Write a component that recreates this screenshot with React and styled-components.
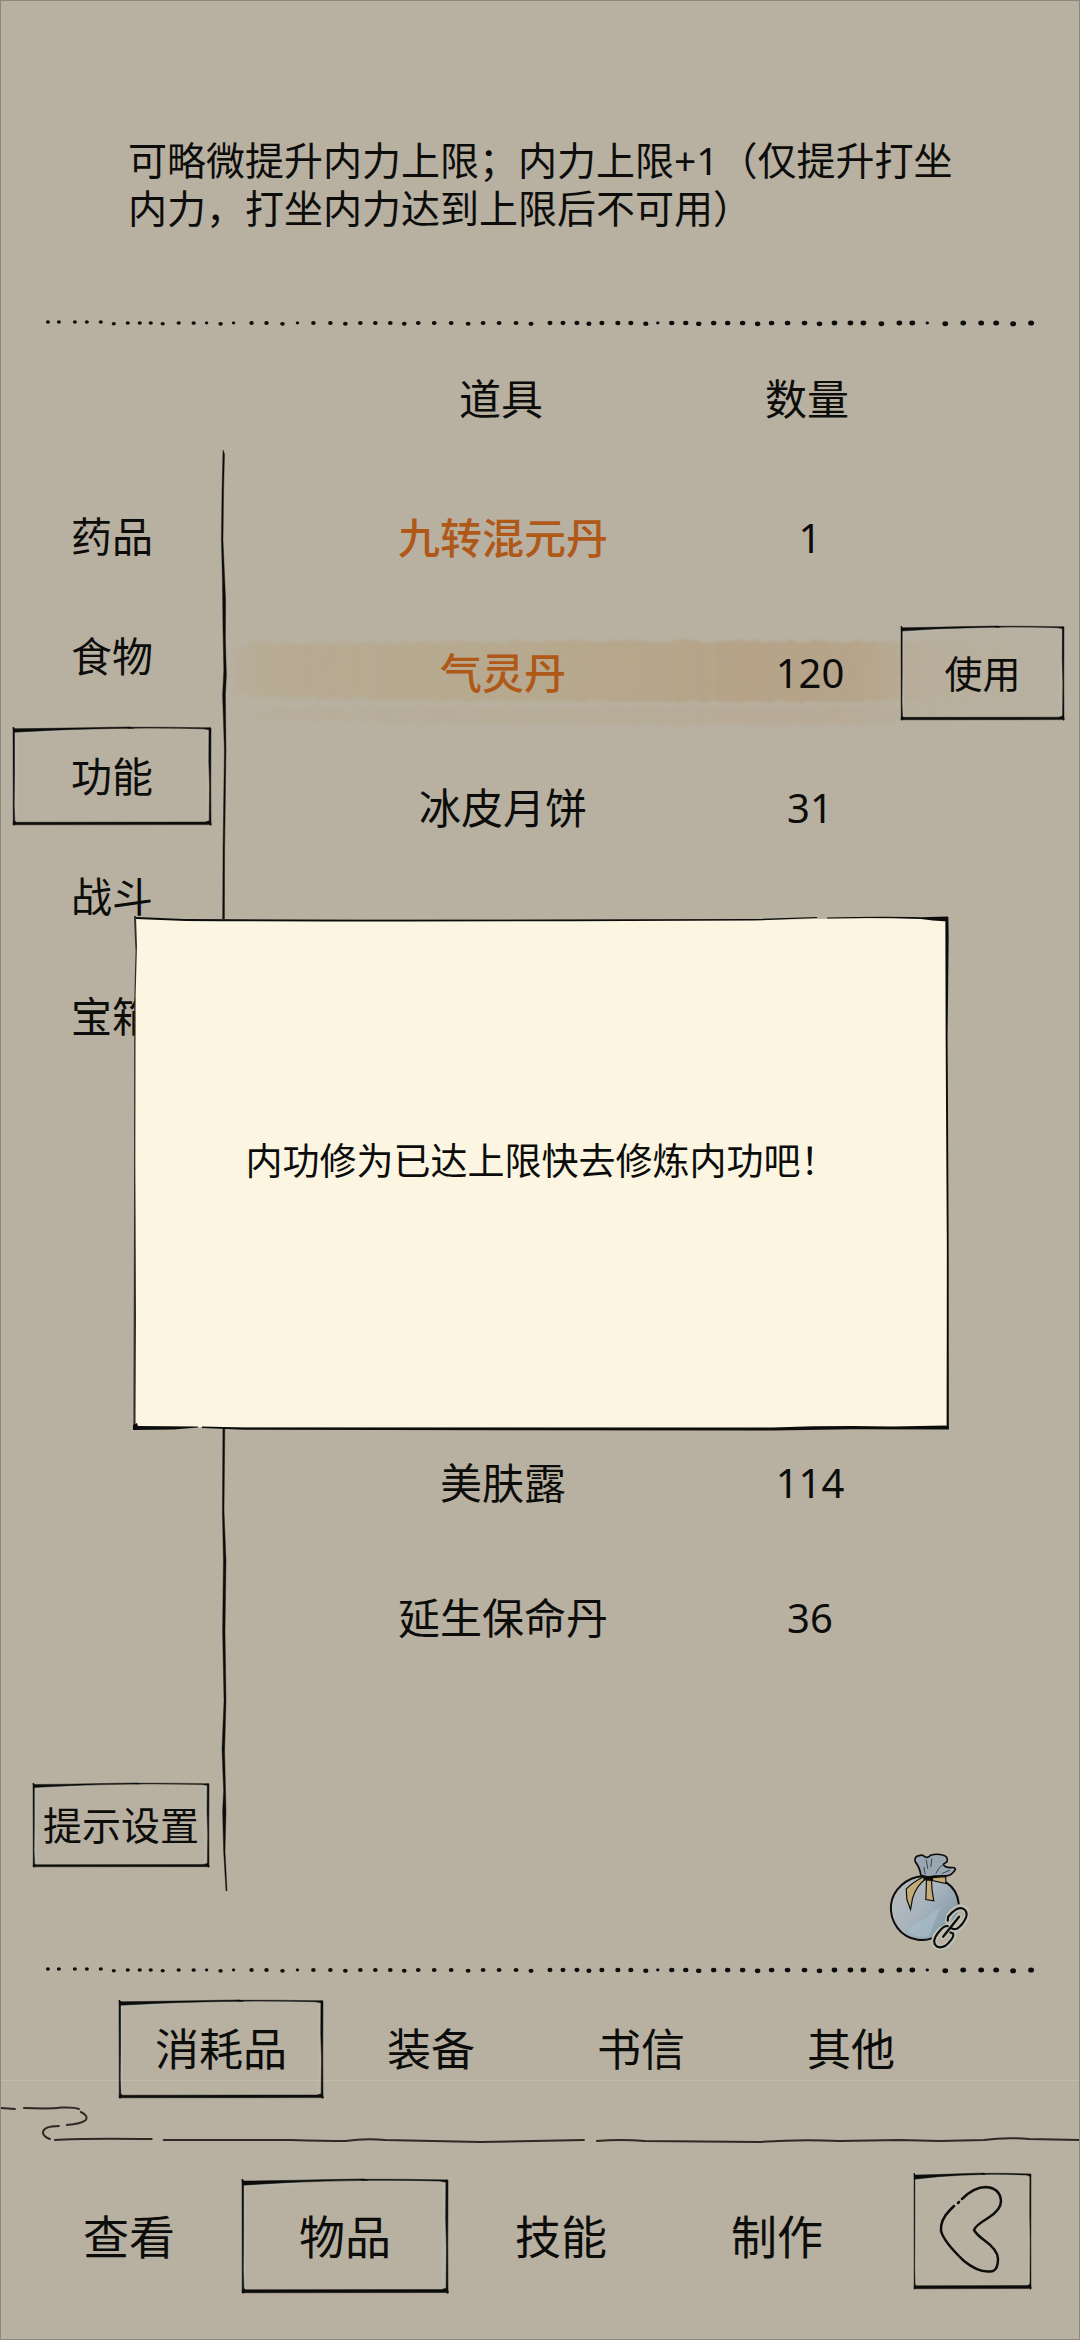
import React from 'react'
import styled, { createGlobalStyle, css } from 'styled-components'

const ink = '#0c0d0b'
const paper = '#b8b0a1'
const edge = '#8b887c'

const GlobalStyle = createGlobalStyle`
    * {
        box-sizing: border-box;
    }

    body {
        margin: 0;
        background: ${paper};
        color: ${ink};
        font-family: 'Noto Sans', 'Noto Sans CJK SC', sans-serif;
    }

    button {
        font-family: inherit;
        color: inherit;
        background: none;
        border: 0;
        padding: 0;
        cursor: pointer;
    }
`

const Screen = styled.div`
    position: relative;
    display: flex;
    flex-direction: column;
    min-height: 100vh;
    border: 1px solid ${edge};
`

const Description = styled.p`
    margin: 0;
    padding: 135px 100px 84px 127px;
    font-size: 39px;
    line-height: 48px;
`

const DotSvg = styled.svg`
    display: block;
    flex: none;
    width: 100%;
    height: 12px;
`

const Body = styled.main`
    flex: 1;
    display: flex;
`

const Sidebar = styled.nav`
    flex: none;
    display: flex;
    flex-direction: column;
    gap: 22px;
    width: 214px;
    padding: 159px 4px 96px 12px;
`

const inkButton = css`
    position: relative;
    display: flex;
    align-items: center;
    justify-content: center;
    line-height: 60px;
    white-space: nowrap;
`

const Category = styled.button`
    ${inkButton}
    width: 198px;
    height: 98px;
    font-size: 41px;
`

const SettingsButton = styled.button`
    ${inkButton}
    align-self: flex-end;
    width: 176px;
    height: 84px;
    margin: auto 2px 0 0;
    font-size: 39px;
`

const Rule = styled.svg`
    flex: none;
    width: 16px;
    margin: 122px 0 72px;
`

const Content = styled.section`
    flex: 1;
    display: flex;
    flex-direction: column;
    justify-content: space-between;
    align-items: flex-end;
`

const Table = styled.table`
    width: 100%;
    table-layout: fixed;
    border-collapse: collapse;
    font-size: 42px;
    line-height: 60px;
    text-align: center;
`

const HeadCell = styled.th`
    height: 142px;
    padding: 0;
    font-weight: 400;
    width: ${props => props.$width || 'auto'};
    padding-left: ${props => props.$indent || '0'};
`

const Row = styled.tr`
    position: relative;
    height: 135px;
`

const NameCell = styled.td`
    padding: 0 0 0 62px;
    font-weight: ${props => props.$rare ? 500 : 400};
    color: ${props => props.$rare ? '#b05818' : 'inherit'};
`

const CountCell = styled.td`
    padding: 0 0 0 6px;
    font-size: 40px;
`

const ActionCell = styled.td`
    padding: 0;
`

const Label = styled.span`
    position: relative;
`

const BrushSvg = styled.svg`
    position: absolute;
    left: 0;
    top: 32px;
    width: 100%;
    height: 96px;
`

const UseButton = styled.button`
    ${inkButton}
    width: 163px;
    height: 94px;
    font-size: 38px;
`

const BagButton = styled.button`
    width: 82px;
    height: 98px;
    margin: 0 110px 13px 0;

    svg {
        display: block;
        width: 100%;
        height: 100%;
    }
`

const Tabs = styled.nav`
    display: flex;
    gap: 6px;
    padding: 25px 0 0 118px;
`

const Tab = styled.button`
    ${inkButton}
    z-index: 1;
    width: 204px;
    height: 98px;
    font-size: 44px;
`

const River = styled.div`
    margin-top: -18px;
    border-top: 1px solid #c2bbac;

    svg {
        display: block;
        width: 100%;
        height: 64px;
    }
`

const Menu = styled.nav`
    display: flex;
    align-items: flex-start;
    gap: 10px;
    padding: 28px 48px 46px 25px;
`

const MenuButton = styled.button`
    ${inkButton}
    width: 206px;
    height: 114px;
    margin-top: 6px;
    font-size: 46px;
`

const BackButton = styled.button`
    ${inkButton}
    width: 117px;
    height: 116px;
    margin-left: auto;
`

const BackIcon = styled.svg`
    position: relative;
    width: 117px;
    height: 116px;
`

const FrameSvg = styled.svg`
    position: absolute;
    inset: 0;
    width: 100%;
    height: 100%;
    overflow: visible;
`

const Overlay = styled.div`
    position: absolute;
    inset: 0;
    z-index: 2;
    display: flex;
    align-items: center;
    justify-content: center;
    padding: 6px 0 0 3px;
`

const Dialog = styled.div`
    position: relative;
    display: flex;
    align-items: center;
    justify-content: center;
    width: 75.8%;
    min-height: 514px;
    padding: 0 40px 24px;
`

const Message = styled.p`
    position: relative;
    margin: 0;
    font-size: 37px;
    line-height: 56px;
`

const dots = [
    47, 58, 74, 86, 100, 113, 127, 139, 150, 162, 178, 193, 206, 220, 233, 251, 266,
    282, 297, 313, 330, 345, 360, 375, 390, 404, 418, 434, 451, 468, 483, 499, 516,
    531, 550, 563, 577, 589, 602, 618, 631, 646, 658, 672, 686, 699, 714, 728, 743,
    758, 772, 788, 805, 820, 835, 851, 864, 882, 900, 913, 928, 946, 964, 982, 997,
    1014, 1032
]

const smallDots = [206, 233, 297, 658, 928]

const DotLine = () => (
    <DotSvg viewBox="0 0 1080 12" preserveAspectRatio="none" aria-hidden="true">
        {dots.map((x, i) => {
            const r = smallDots.includes(x) ? 1.7 : 2 + i / 66
            return (
                <ellipse
                    key={x}
                    cx={x}
                    cy={i < 5 ? 6 : 7 + (i % 4 === 1 ? 0.8 : 0)}
                    rx={r}
                    ry={r * 0.85}
                    fill={ink}
                />
            )
        })}
    </DotSvg>
)

// brush-drawn box, heavy at the top left and along the bottom
const Frame = () => (
    <FrameSvg viewBox="0 0 200 100" preserveAspectRatio="none" aria-hidden="true">
        <path d="M3 96 L3 6 L60 3.5 M196 4 L195.5 95" fill="none" stroke="#b8bab2" strokeWidth="2" opacity="0.7" />
        <g fill={ink} stroke={ink} strokeWidth="0.5">
            <path d="M0 0.5 L1.6 1.8 L36 1.4 Q75 0.6 118 0 L122 1.2 Q80 1.6 42 3.2 L1 5.4 Z" />
            <path d="M116 0.3 Q160 0 199.5 0.8 L199.5 3 L192 1.8 Q160 0.9 116 1.2 Z" />
            <path d="M0 0 L1.5 1 L1.5 50 L1.2 80 L2 100 L0.2 100 L0.2 70 Z" />
            <path d="M198 1 L200 1 L199.8 60 L200 98 L198.2 97 L198.6 60 L197.8 35 Z" />
            <path d="M0.2 97.4 L2 96.2 L3.4 97.2 L194 97 L198.6 95.6 L200.6 99 L200 100.4 L198 99.6 L0.2 99.8 Z" />
        </g>
    </FrameSvg>
)

const DialogFrame = () => (
    <FrameSvg viewBox="0 0 816 514" preserveAspectRatio="none" aria-hidden="true">
        <path d="M1 2 L60 3 L600 4 L760 2 L815 3 L814 511 L700 511 L620 512 L2 511 Z" fill="#fcf5e2" />
        <path d="M0 0 L2 1 L52 3 Q330 4 620 3 L684 1 L684 2 L620 4.6 Q300 6 52 5 L2 3 Z" fill={ink} />
        <path d="M694 1.4 Q750 0.2 788 1.2 L815 0.5 L815 5.5 L800 4.6 L788 3 Q740 1.4 694 2.6 Z" fill={ink} />
        <path d="M0 0 L2 0 L3 30 L1.6 80 L1.2 250 L2 400 L1.2 514 L-0.6 514 L0 300 L0.2 90 L1.4 35 Z" fill="#30302a" />
        <path d="M812.5 1 L815.5 1 L815.8 20 L814.8 120 L815.8 330 L816 513 L813.8 513 L814 330 L812.8 120 Z" fill={ink} />
        <path d="M-1 509 L3 507 L4 510 L64 510.5 L64 511.5 L40 513.4 L-1 514 Z" fill={ink} />
        <path d="M68 510.6 L110 511.4 L640 511.4 Q700 509.4 760 510.4 L813 509.6 L816 511 L816 513.4 L720 513.2 L640 514.6 L110 513.8 L68 512 Z" fill={ink} />
    </FrameSvg>
)

const Brush = () => (
    <BrushSvg viewBox="0 0 848 96" preserveAspectRatio="none" aria-hidden="true">
        <defs>
            <linearGradient id="wash" x1="0" x2="1" y1="0" y2="0">
                <stop offset="0" stopColor="#b39c6c" stopOpacity="0.1" />
                <stop offset="0.04" stopColor="#b39c6c" stopOpacity="0.26" />
                <stop offset="0.35" stopColor="#b39c6c" stopOpacity="0.36" />
                <stop offset="0.6" stopColor="#b2946a" stopOpacity="0.46" />
                <stop offset="0.74" stopColor="#b2946a" stopOpacity="0.42" />
                <stop offset="0.82" stopColor="#b39c6c" stopOpacity="0.1" />
                <stop offset="0.95" stopColor="#b39c6c" stopOpacity="0" />
            </linearGradient>
            <filter id="rough" x="-2%" y="-10%" width="104%" height="120%">
                <feTurbulence type="fractalNoise" baseFrequency="0.09 0.06" numOctaves="2" seed="4" />
                <feDisplacementMap in="SourceGraphic" scale="8" />
                <feGaussianBlur stdDeviation="1.4" />
            </filter>
        </defs>
        <g filter="url(#rough)" fill="url(#wash)">
            <path d="M2 12 L20 6 L200 5 L520 4 L848 6 L848 64 L500 65 L200 64 L20 60 L2 54 Z" />
            <path d="M10 71 L240 69 L520 69 L848 66 L848 84 L520 88 L160 87 L10 81 Z" opacity="0.4" />
        </g>
    </BrushSvg>
)

const Bag = () => (
    <svg viewBox="80 95 245 295" aria-hidden="true">
        <defs>
            <linearGradient id="cloth" x1="0.1" x2="0.9" y1="0.2" y2="0.8">
                <stop offset="0" stopColor="#b7b9bb" />
                <stop offset="0.45" stopColor="#a9b4bd" />
                <stop offset="1" stopColor="#809aa8" />
            </linearGradient>
        </defs>
        <path
            d="M186 167 C140 172 96 205 91 255 C88 300 118 350 172 359 C232 366 292 318 295 258 C297 225 280 200 256 184 C240 172 215 166 186 167 Z"
            fill="url(#cloth)"
        />
        <path d="M140 332 Q170 300 195 296 Q215 272 240 262 Q220 310 205 350 Q165 356 140 332 Z" fill="#a9bfcc" opacity="0.6" />
        <path
            d="M295 250 C292 222 278 200 258 187 M186 168 C140 170 96 208 91 255 C87 305 120 352 172 359 Q196 362 214 355"
            fill="none"
            stroke={ink}
            strokeWidth="6"
            strokeLinecap="round"
        />
        <path
            d="M181 165 Q178 142 164 124 Q160 108 176 106 Q186 102 194 110 Q204 114 210 105 Q228 99 246 104 Q264 108 260 124 L249 132 Q252 142 270 142 Q284 140 285 147 Q276 164 258 167 Q220 166 206 171 Z"
            fill="#9ba6b3"
            stroke={ink}
            strokeWidth="5"
            strokeLinejoin="round"
        />
        <path d="M197 118 L202 146 M214 115 L211 140 M249 132 Q236 138 226 160 M190 140 L194 162 M268 150 L244 160" fill="none" stroke="#3b434b" strokeWidth="3" />
        <path d="M188 170 Q156 186 137 206 L139 238 L150 268 L156 234 Q168 196 195 176 Z" fill="#c3ab78" stroke={ink} strokeWidth="3.5" />
        <path d="M198 178 L196 238 L220 242 Q213 210 213 178 Z" fill="#c3ab78" stroke={ink} strokeWidth="3.5" />
        <path d="M216 172 L256 169 L256 190 L216 181 Z" fill="#c3ab78" stroke={ink} strokeWidth="3.5" />
        <path d="M188 172 Q200 164 217 170 L214 182 L190 180 Z" fill={ink} />
        {/* chain badge */}
        <g fill="none" strokeLinecap="round" strokeLinejoin="round">
            <path
                d="M262 302 L268 284 Q274 276 288 266 Q304 258 314 268 Q324 278 318 292 Q308 314 290 326 L272 326 M262 318 L240 330 Q222 350 221 364 Q222 380 238 382 Q256 382 272 362 L280 350 L278 340 M248 350 L296 290"
                stroke="#bfc1b7"
                strokeWidth="18"
            />
            <path
                d="M262 302 L263 290 Q274 276 288 267 Q304 260 313 269 Q322 278 317 292 Q308 314 290 326 Q276 330 272 322 M262 318 Q252 316 240 330 Q222 350 221 364 Q222 380 238 382 Q256 382 270 362 Q281 350 278 340 L270 337"
                stroke={ink}
                strokeWidth="6.5"
            />
            <path d="M248 350 L296 290" stroke={ink} strokeWidth="7" />
        </g>
    </svg>
)

const categories = ['药品', '食物', '功能', '战斗', '宝箱']
const tabs = ['消耗品', '装备', '书信', '其他']
const menu = ['查看', '物品', '技能', '制作']

const items = [
    { name: '九转混元丹', count: 1, rare: true },
    { name: '气灵丹', count: 120, rare: true, active: true },
    { name: '冰皮月饼', count: 31 },
    {},
    {},
    {},
    {},
    { name: '美肤露', count: 114 },
    { name: '延生保命丹', count: 36 }
]

const ItemRow = ({ item }) => (
    <Row>
        <NameCell $rare={item.rare}>
            {item.active && <Brush />}
            <Label>{item.name}</Label>
        </NameCell>
        <CountCell>
            <Label>{item.count}</Label>
        </CountCell>
        <ActionCell>
            {item.active && (
                <UseButton>
                    <Frame />
                    <Label>使用</Label>
                </UseButton>
            )}
        </ActionCell>
    </Row>
)

const App = () => (
    <React.Fragment>
        <GlobalStyle />
        <Screen>
            <Description>
                可略微提升内力上限；内力上限+1（仅提升打坐内力，打坐内力达到上限后不可用）
            </Description>
            <DotLine />
            <Body>
                <Sidebar>
                    {categories.map(name => (
                        <Category key={name}>
                            {name === '功能' && <Frame />}
                            <Label>{name}</Label>
                        </Category>
                    ))}
                    <SettingsButton>
                        <Frame />
                        <Label>提示设置</Label>
                    </SettingsButton>
                </Sidebar>
                <Rule viewBox="0 0 16 1440" preserveAspectRatio="none" aria-hidden="true">
                    <path
                        d="M8 0 L9.5 4 L8.6 40 L8 90 L10.6 150 L10.4 190 L11.4 225 L10.4 245 L11 300 L9.6 400 L9.4 480 L10 960 L9 1060 L11 1110 L10 1180 L11 1250 L9.6 1300 L11 1360 L10 1400 L12 1440 L11 1440 L8.6 1400 L7.6 1360 L8.6 1340 L7 1298 L9 1250 L7.6 1180 L8.4 1110 L7.4 1060 L8 960 L7.6 480 L8 400 L9.4 300 L7.6 245 L8.8 220 L8 180 L7.4 130 L6.4 90 L7 40 Z"
                        fill={ink}
                        stroke={ink}
                        strokeWidth="0.4"
                    />
                </Rule>
                <Content>
                    <Table>
                        <thead>
                            <tr>
                                <HeadCell $indent="58px">道具</HeadCell>
                                <HeadCell $width="188px">数量</HeadCell>
                                <HeadCell $width="178px" aria-label="操作" />
                            </tr>
                        </thead>
                        <tbody>
                            {items.map((item, i) => <ItemRow key={i} item={item} />)}
                        </tbody>
                    </Table>
                    <BagButton aria-label="锦囊">
                        <Bag />
                    </BagButton>
                </Content>
            </Body>
            <DotLine />
            <Tabs>
                {tabs.map(name => (
                    <Tab key={name}>
                        {name === '消耗品' && <Frame />}
                        <Label>{name}</Label>
                    </Tab>
                ))}
            </Tabs>
            <River>
                <svg viewBox="0 0 1080 64" preserveAspectRatio="none" aria-hidden="true">
                    <g fill="none" stroke="#2f2824" strokeWidth="2" strokeLinecap="round">
                        <path d="M0 27 L14 28" />
                        <path d="M23 27 Q50 28 60 26.5 Q74 26 78 28" />
                        <path d="M80 31 Q88 35 85 39 Q80 43 66 44" />
                        <path d="M58 45 Q42 45 42 52 Q43 56 49 58" />
                        <path d="M54 59 Q80 57 151 58" />
                        <path d="M163 59 L290 59 Q325 60 345 60 Q365 57 385 59 L480 61 L584 59" />
                        <path d="M597 60 Q620 58 645 60 L760 61 Q800 58 840 60 L900 59 L940 60 L985 59 Q1005 56 1030 58 L1080 59" />
                    </g>
                </svg>
            </River>
            <Menu>
                {menu.map(name => (
                    <MenuButton key={name}>
                        {name === '物品' && <Frame />}
                        <Label>{name}</Label>
                    </MenuButton>
                ))}
                <BackButton aria-label="返回">
                    <Frame />
                    <BackIcon viewBox="0 0 117 116" aria-hidden="true">
                        <g fill="none" stroke={ink} strokeWidth="2.5" strokeLinecap="round">
                            <path d="M48 26 Q60 14 72 14 Q86 15 87 28 Q87 37 74 45 Q61 53 60 57 Q63 62 70 67 Q84 77 84 86 Q84 96 79 98 Q66 101 50 88 Q30 69 27 58 Q26 47 36 37 L40 33" />
                            <path d="M44 30 L45 29" />
                        </g>
                    </BackIcon>
                </BackButton>
            </Menu>
            <Overlay>
                <Dialog role="dialog">
                    <DialogFrame />
                    <Message>内功修为已达上限快去修炼内功吧！</Message>
                </Dialog>
            </Overlay>
        </Screen>
    </React.Fragment>
)

export default App
